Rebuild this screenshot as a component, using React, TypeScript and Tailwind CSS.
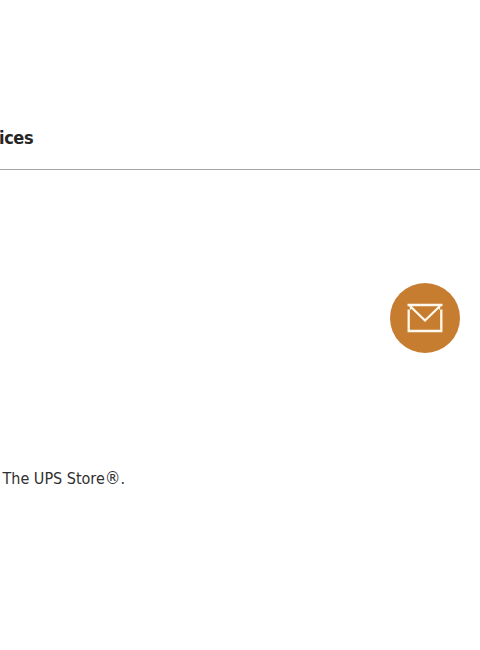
export default function App() {
  return (
    <main className="flex h-[650px] w-[480px] flex-col overflow-hidden bg-white text-[#252525]">
      <header className="flex h-[170px] items-end border-b border-[#a5a5a5] pb-[18px]">
        <h2 className="-ml-px whitespace-nowrap font-['DejaVu_Sans_Condensed','DejaVu_Sans',sans-serif] text-[18px] font-bold leading-[26px] tracking-[-0.4px] [font-stretch:condensed]">ices</h2>
      </header>
      <section className="flex h-[183px] items-end justify-end pr-5">
        <div className="flex size-[70px] items-center justify-center rounded-full bg-[#c67d30]">
          <svg width="36" height="30" viewBox="0 0 36 30" fill="none" stroke="#fff9ed" strokeWidth="2.3">
            <path d="M.5 2H35.5M1.7 6.5V28H34.3V6.5M3 3L18 17.5L33 3" />
            <path d="M3.5 3V6.5M32.5 3V6.5" strokeWidth="1.2" />
          </svg>
        </div>
      </section>
      <p className="mt-[114px] whitespace-nowrap pl-[2.5px] font-['DejaVu_Sans_Condensed','DejaVu_Sans',sans-serif] text-[16px] leading-6 text-[#303030] [font-stretch:condensed]">The UPS Store<span className="text-[17.5px] leading-none">®</span>.</p>
    </main>
  );
}
